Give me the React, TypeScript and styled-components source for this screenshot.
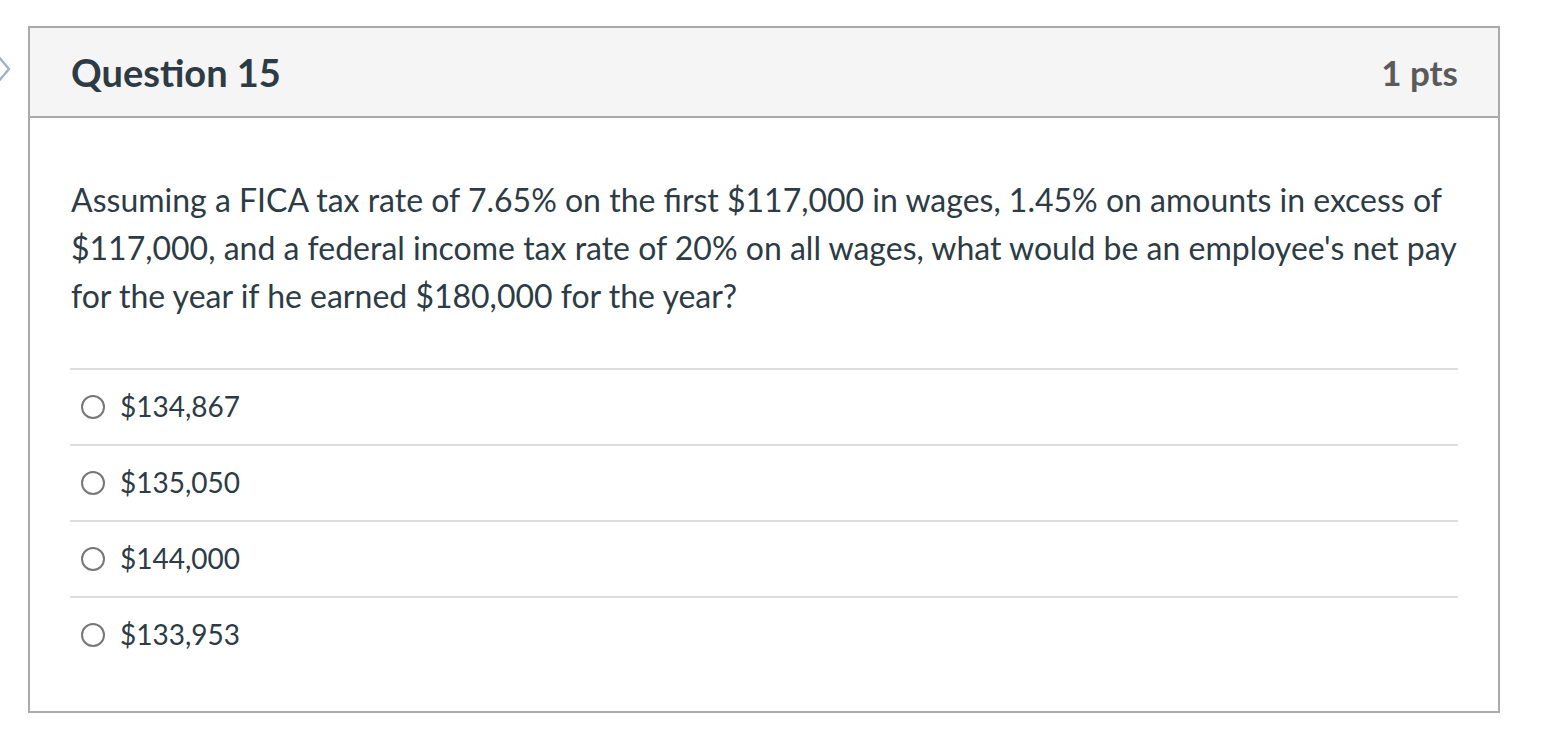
import React from "react";
import styled, { createGlobalStyle } from "styled-components";

const Global = createGlobalStyle`
  html, body { margin: 0; padding: 0; background: #fff; }
  body { font-family: Lato, "Open Sans", "Liberation Sans", sans-serif; color: #2d3b45; }
`;

const Page = styled.div`
  display: flex;
  align-items: flex-start;
  padding-top: 26px;
`;

const Gutter = styled.div`
  width: 28px;
  flex: 0 0 28px;
  padding-top: 28px;
  display: flex;
`;

const Card = styled.section`
  width: 1472px;
  box-sizing: border-box;
  border: 2px solid #aaaaaa;
  background: #fff;
`;

const Header = styled.header`
  height: 90px;
  box-sizing: border-box;
  background: #f5f5f5;
  border-bottom: 2px solid #aaaaaa;
  display: flex;
  align-items: center;
  justify-content: space-between;
  padding: 0 40px 0 41px;
`;

const Title = styled.h2`
  margin: 0;
  font-size: 38px;
  font-weight: 700;
  color: #2d3b45;
`;

const Points = styled.span`
  font-size: 35px;
  font-weight: 700;
  color: #5b5b5b;
`;

const Body = styled.div`
  padding: 58px 40px 39px 40px;
`;

const Question = styled.p`
  margin: 0 0 48px 1px;
  font-size: 32px;
  line-height: 48px;
  color: #2d3b45;
`;

const Option = styled.label`
  display: flex;
  align-items: center;
  height: 76px;
  box-sizing: border-box;
  border-top: 2px solid #dddddd;
  padding: 0 0 2px 10px;
  font-size: 28px;
  color: #2d3b45;
`;

const Radio = styled.span`
  width: 20px;
  height: 20px;
  border: 2px solid #777;
  border-radius: 50%;
  margin: 2px 15px 0 1px;
  flex: 0 0 auto;
`;

const options = ["$134,867", "$135,050", "$144,000", "$133,953"];

export default function App() {
  return (
    <>
      <Global />
      <Page>
        <Gutter>
          <svg width="12" height="30" viewBox="0 0 12 30" aria-hidden>
            <path d="M-2 2 L9 15 L-2 28" fill="none" stroke="#9fb4c8" strokeWidth="2.5" strokeLinejoin="round" />
          </svg>
        </Gutter>
        <Card>
          <Header>
            <Title>Question 15</Title>
            <Points>1 pts</Points>
          </Header>
          <Body>
            <Question>
              Assuming a FICA tax rate of 7.65% on the first $117,000 in wages, 1.45% on amounts in excess of
              $117,000, and a federal income tax rate of 20% on all wages, what would be an employee's net pay
              for the year if he earned $180,000 for the year?
            </Question>
            {options.map((o) => (
              <Option key={o}>
                <Radio />
                {o}
              </Option>
            ))}
          </Body>
        </Card>
      </Page>
    </>
  );
}
